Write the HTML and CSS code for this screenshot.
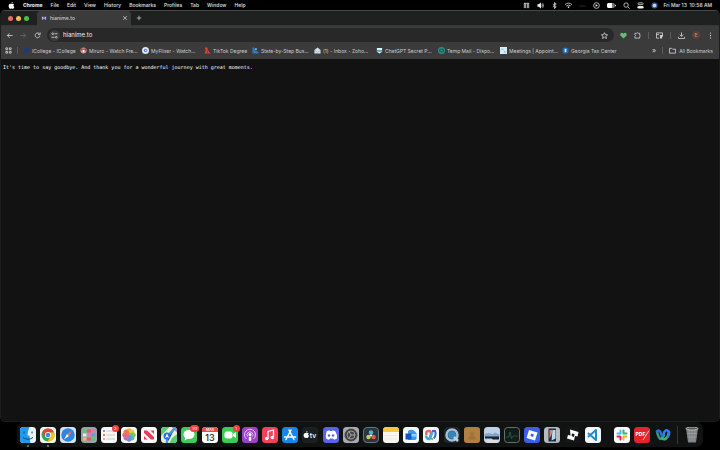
FILE: index.html
```
<!DOCTYPE html>
<html lang="en">
<head>
<meta charset="utf-8">
<title>hianime.to</title>
<link rel="stylesheet" href="styles.css">
</head>
<body>
<header class="menubar">
  <svg class="apple" viewBox="0 0 16 16"><path fill="#fff" d="M11 0c0 2-1.500 3.500-3.200 3.500C7.600 1.800 9.200.2 11 0zM8 4.600c.8 0 1.700-.8 3.100-.8 1.300 0 2.400.7 3 1.600-2.500 1.500-2.100 4.900.4 5.900-.7 2-2.100 4.300-3.500 4.300-1.100 0-1.500-.7-2.900-.7s-1.800.7-2.900.7C3.300 15.600 1.500 12 1.500 9c0-3.200 2-5.200 4-5.200 1.100 0 1.900.8 2.500.8z"/></svg>
  <nav class="menus">
    <a class="app" href="#">Chrome</a><a href="#">File</a><a href="#">Edit</a><a href="#">View</a><a href="#">History</a><a href="#">Bookmarks</a><a href="#">Profiles</a><a href="#">Tab</a><a href="#">Window</a><a href="#">Help</a>
  </nav>
  <div class="status">
    <svg viewBox="0 0 16 16"><path class="ln" d="M3 14V4h3v10M10 14V4h3v10M2 3h12"/></svg>
    <svg viewBox="0 0 16 16"><path fill="#eee" d="M1 5h3l5-4v14l-5-4H1z"/><path class="ln" d="M11 5q2 3 0 6M13 3q3 5 0 10"/></svg>
    <svg viewBox="0 0 16 16"><path class="ln" d="M4 5l8 6-4 4V1l4 4-8 6"/></svg>
    <svg viewBox="0 0 16 16"><path class="ln" d="M0 6q8-7 16 0M3 9q5-4 10 0"/><path fill="#fff" d="M5.500 11q2.500-2 5 0L8 14z"/></svg>
    <svg viewBox="0 0 16 16"><path stroke="#333" stroke-width="2" d="M1 9h14"/></svg>
    <svg viewBox="0 0 16 16"><circle class="ln" cx="8" cy="8" r="6.500"/><path fill="#fff" d="M6 5l5 3-5 3z"/></svg>
    <svg class="battery" viewBox="0 0 22 16"><rect x="0" y="2" width="19" height="12" rx="4" fill="#777"/><path fill="#fff" d="M4 2h8v12H4q-4 0-4-4V6q0-4 4-4zM20 6h2v4h-2z"/></svg>
    <svg viewBox="0 0 16 16"><circle class="ln" cx="7" cy="7" r="5"/><path class="ln" d="M11 11l4 4"/></svg>
    <svg viewBox="0 0 16 16"><rect class="ln" x="2" y="2" width="12" height="4" rx="2"/><rect x="1" y="9" width="14" height="6" rx="3" fill="#eee"/></svg>
    <svg viewBox="0 0 16 16"><circle cx="8" cy="8" r="7" fill="#3a5f9e"/><circle cx="8" cy="8" r="4" fill="#bdd4ed"/></svg>
  </div>
  <time class="clock">Fri Mar 13&nbsp; 10:56 AM</time>
</header>

<main class="window">
  <div class="tabstrip">
    <div class="lights"><button class="red" aria-label="Close window"></button><button class="yellow" aria-label="Minimize"></button><button class="green" aria-label="Full screen"></button></div>
    <div class="tab">
      <svg viewBox="0 0 16 16"><path fill="#4a4585" d="M1 3h14v10H1z"/><path d="M4 12V5l4 5 4-5v7" fill="none" stroke="#ddd" stroke-width="2"/></svg>
      <span>hianime.to</span>
      <button aria-label="Close tab"><svg viewBox="0 0 16 16"><path class="ln" d="M3 3l10 10M13 3L3 13"/></svg></button>
    </div>
    <button class="newtab" aria-label="New tab"><svg viewBox="0 0 16 16"><path class="ln" d="M8 2v12M2 8h12"/></svg></button>
  </div>
  <div class="toolbar">
    <div class="navs">
      <button aria-label="Back"><svg viewBox="0 0 16 16"><path class="ln" d="M15 8H3M8 3L3 8l5 5"/></svg></button>
      <button class="dim" aria-label="Forward"><svg viewBox="0 0 16 16"><path class="ln" d="M1 8h12M8 3l5 5-5 5"/></svg></button>
      <button aria-label="Reload"><svg viewBox="0 0 16 16"><path class="ln" d="M13 5a5.500 5.500 0 1 0 .5 4M14 1v5H9"/></svg></button>
    </div>
    <div class="omnibox">
      <button class="site" aria-label="Site information"><svg viewBox="0 0 16 16"><path class="ln" d="M8 4h7M1 12h7"/><circle class="ln" cx="4" cy="4" r="2"/><circle class="ln" cx="12" cy="12" r="2"/></svg></button>
      <input type="text" value="hianime.to" aria-label="Address">
      <button aria-label="Bookmark this tab"><svg viewBox="0 0 16 16"><path class="ln" d="M8 1.500l2 4.500 5 .5-3.800 3.200L12.500 15 8 12l-4.500 3 1.300-5.300L1 6.500 6 6z"/></svg></button>
    </div>
    <div class="tools">
      <button aria-label="Heart extension"><svg viewBox="0 0 16 16"><path fill="#64bd72" d="M8 15L1 8C-1 3 5-.5 8 4c3-4.500 9-1 7 4z"/></svg></button>
      <button aria-label="Extensions"><svg viewBox="0 0 16 16"><path class="ln" d="M2 3h4q2-3 4 0h3v4q3 2 0 4v3H2v-4q3-2 0-4z"/></svg></button>
      <i class="rule"></i>
      <button aria-label="Side panel"><svg viewBox="0 0 16 16"><path class="ln" d="M7 14H1V2h14v5M1 6h6"/><path fill="#ccc" d="M9 7h7v3l-2 1v4H9z"/></svg></button>
      <i class="rule"></i>
      <button aria-label="Downloads"><svg viewBox="0 0 16 16"><path class="ln" d="M8 1v9M4 6l4 4 4-4M1 11v4h14v-4"/></svg></button>
      <button class="avatar" aria-label="Profile">E</button>
      <button aria-label="Menu"><svg viewBox="0 0 16 16"><g fill="#ccc"><circle cx="8" cy="2.500" r="1.600"/><circle cx="8" cy="8" r="1.600"/><circle cx="8" cy="13.500" r="1.600"/></g></svg></button>
    </div>
  </div>
  <nav class="bookmarks">
    <button class="apps" aria-label="Apps"><svg viewBox="0 0 16 16"><path class="ln" d="M2 2h4v4H2zM10 2h4v4h-4zM2 10h4v4H2zM10 10h4v4h-4z"/></svg></button>
    <i class="rule"></i>
    <div class="links">
      <a class="mid" href="#"><svg viewBox="0 0 16 16"><path fill="#1d3685" d="M4 2h8l3 4-7 9-6-7z"/></svg><span>ICollege - ICollege</span></a>
      <a href="#"><svg viewBox="0 0 16 16"><circle cx="8" cy="8" r="7" fill="#c99"/><path fill="#a53434" d="M1 2l5 2h5l4-2-3 7H4z"/><path fill="#fff" d="M5 6h6l-2 6H7z"/></svg><span>Miruro - Watch Fre...</span></a>
      <a href="#"><svg viewBox="0 0 16 16"><circle cx="8" cy="8" r="8" fill="#dce8f8"/><circle cx="8" cy="8" r="4" fill="#4786d8"/><path fill="#fff" d="M7 6l4 2-4 2z"/></svg><span>MyFlixer - Watch...</span></a>
      <a class="short" href="#"><svg viewBox="0 0 16 16"><path fill="#e34338" d="M2 1h6v5l7 9H1l3-6z"/><path stroke="#4a2624" d="M8 8v6"/></svg><span>TikTok Degree</span></a>
      <a href="#"><svg viewBox="0 0 16 16"><path fill="#3277c2" d="M1 1h5v6l9 4v4H1z"/><path fill="#89b8e8" d="M7 3h4v4H7z"/></svg><span>State-by-Step Bus...</span></a>
      <a href="#"><svg viewBox="0 0 16 16"><path fill="#d5dfec" d="M1 7l7-6 7 6v8H1z"/><path stroke="#8597b5" fill="none" d="M2 8l6 4 6-4"/></svg><span>(1) - Inbox - Zoho...</span></a>
      <a href="#"><svg viewBox="0 0 16 16"><path fill="#e5f5fa" d="M2 2h12v9l-6 4-6-4z"/><path fill="#49a9bb" d="M2 7h12v4H2z"/></svg><span>ChatGPT Secret P...</span></a>
      <a href="#"><svg viewBox="0 0 16 16"><circle cx="8" cy="8" r="8" fill="#24938b"/><path stroke="#164e4c" fill="none" stroke-width="2" d="M4 5h8v6H4z"/></svg><span>Temp Mail - Dispo...</span></a>
      <a href="#"><svg viewBox="0 0 16 16"><path fill="#d8eafa" d="M0 0h16v16H0z"/><path fill="#9cc3e5" d="M3 4h5v3H3zM9 9h4v4H9z"/></svg><span>Meetings | Appoint...</span></a>
      <a href="#"><svg viewBox="0 0 16 16"><rect x="1" y="1" width="14" height="14" rx="4" fill="#1769b2"/><path fill="#dceafa" d="M6 4h4v8H6z"/></svg><span>Georgia Tax Center</span></a>
    </div>
    <button class="more" aria-label="More bookmarks">»</button>
    <i class="rule"></i>
    <a class="all" href="#"><svg viewBox="0 0 16 16"><path class="ln" d="M1 3h5l2 2h7v9H1z"/></svg><span>All Bookmarks</span></a>
  </nav>
  <article class="page"><pre>It's time to say goodbye. And thank you for a wonderful journey with great moments.</pre></article>
</main>

<footer class="dock">
  <a class="open" href="#" aria-label="Finder"><svg viewBox="0 0 32 32"><rect width="32" height="32" rx="7" fill="#eaf3fa"/><path fill="#2199ef" d="M7 0h12q-4 8-4 17h4q0 8 2 15H7q-7 0-7-7V7q0-7 7-7z"/><path d="M8 9v4M24 9v4M6 21q10 7 20 0" stroke="#174775" stroke-width="2" fill="none"/></svg></a>
  <a class="open" href="#" aria-label="Chrome"><svg viewBox="0 0 32 32"><rect width="32" height="32" rx="7" fill="#f6f6f6"/><circle cx="16" cy="16" r="13" fill="#35a853"/><path fill="#e84335" d="M4.500 10A13 13 0 0 1 28 11H16l-5 8z"/><path fill="#fbc116" d="M28 11q4 10-4 15.500-4 3-9 2.500l6-10-2-8z"/><circle cx="16" cy="16" r="6" fill="#fff"/><circle cx="16" cy="16" r="4.600" fill="#4285f4"/></svg></a>
  <a href="#" aria-label="Safari"><svg viewBox="0 0 32 32"><rect width="32" height="32" rx="7" fill="#d3e4f2"/><circle cx="16" cy="16" r="13.500" fill="#2e86e0"/><path fill="#fff" d="M8 25l6-11 4 4z"/><path fill="#e9786e" d="M24 8l-6 10-4-4z"/></svg></a>
  <a href="#" aria-label="Launchpad"><svg viewBox="0 0 32 32"><rect width="32" height="32" rx="7" fill="#9aa2a8"/><g><path fill="#55cb72" d="M4 5h7v6H4z"/><path fill="#e85b5b" d="M12 5h8v6h-8zM12 21h8v6h-8z"/><path fill="#e678ae" d="M21 5h7v6h-7zM12 13h8v6h-8z"/><path fill="#e6e9ea" d="M4 13h7v6H4z"/><path fill="#5b9fe0" d="M21 13h7v6h-7z"/><path fill="#efb851" d="M4 21h7v6H4z"/><path fill="#62c66f" d="M21 21h7v6h-7z"/></g></svg></a>
  <a href="#" aria-label="Reminders"><svg viewBox="0 0 32 32"><rect width="32" height="32" rx="7" fill="#f7f7f7"/><path stroke="#bbb" stroke-width="1.500" d="M11 8h17M11 16h17M11 24h17"/><circle cx="6" cy="8" r="2" fill="#3489e8"/><circle cx="6" cy="16" r="2" fill="#e94b45"/><circle cx="6" cy="24" r="2" fill="#f59c32"/></svg><b class="badge">2</b></a>
  <a href="#" aria-label="Photos"><svg viewBox="0 0 32 32"><rect width="32" height="32" rx="7" fill="#fafafa"/><g opacity=".9"><ellipse cx="16" cy="9" rx="5" ry="6.500" fill="#f5a62e"/><ellipse cx="16" cy="9" rx="5" ry="6.500" fill="#d6cc36" transform="rotate(45 16 16)"/><ellipse cx="16" cy="9" rx="5" ry="6.500" fill="#75bd4b" transform="rotate(90 16 16)"/><ellipse cx="16" cy="9" rx="5" ry="6.500" fill="#47b8a7" transform="rotate(135 16 16)"/><ellipse cx="16" cy="9" rx="5" ry="6.500" fill="#558bd6" transform="rotate(180 16 16)"/><ellipse cx="16" cy="9" rx="5" ry="6.500" fill="#a66ac3" transform="rotate(225 16 16)"/><ellipse cx="16" cy="9" rx="5" ry="6.500" fill="#e6577b" transform="rotate(270 16 16)"/><ellipse cx="16" cy="9" rx="5" ry="6.500" fill="#ef6745" transform="rotate(315 16 16)"/></g></svg></a>
  <a href="#" aria-label="News"><svg viewBox="0 0 32 32"><rect width="32" height="32" rx="7" fill="#fafafa"/><path fill="#ee3957" d="M6 7h6l14 13v5h-6L6 12zM6 18l7 7H6zM19 7h7v7z"/></svg></a>
  <a href="#" aria-label="Maps"><svg viewBox="0 0 32 32"><rect width="32" height="32" rx="7" fill="#e9efdf"/><path fill="#5bce75" d="M7 0h10L0 18V7q0-7 7-7zM32 14v11q0 7-7 7h-8l5-10z"/><path fill="#b57cdc" d="M25 0q7 0 7 7v4L21 0z"/><path stroke="#3b9cec" stroke-width="5" d="M12 32V20L28 2"/><circle cx="12" cy="18" r="7" fill="#2372dc"/><path fill="#fff" d="M12 13l4 9-4-2-4 2z"/></svg></a>
  <a href="#" aria-label="Messages"><svg viewBox="0 0 32 32"><rect width="32" height="32" rx="7" fill="#41cb5a"/><ellipse cx="16" cy="15" rx="11" ry="9" fill="#fff"/><path fill="#fff" d="M9 20l-2 7 8-4z"/></svg><b class="badge wide">99</b></a>
  <a href="#" aria-label="Calendar"><svg viewBox="0 0 32 32"><rect width="32" height="32" rx="7" fill="#fff"/><path fill="#f04b43" d="M0 10V7q0-7 7-7h18q7 0 7 7v3z"/><text x="16" y="8" class="month">MAR</text><text x="16" y="27" class="day">13</text></svg></a>
  <a href="#" aria-label="FaceTime"><svg viewBox="0 0 32 32"><rect width="32" height="32" rx="7" fill="#3bcc55"/><rect x="5" y="9" width="16" height="14" rx="4" fill="#fff"/><path fill="#fff" d="M22 14l6-4v12l-6-4z"/></svg><b class="badge">1</b></a>
  <a href="#" aria-label="Podcasts"><svg viewBox="0 0 32 32"><rect width="32" height="32" rx="7" fill="#9b42cd"/><g fill="none" stroke="#e7c6f5" stroke-width="2"><path d="M9 24a11 11 0 1 1 14 0M11 19a6 6 0 1 1 10 0"/></g><circle cx="16" cy="15" r="3" fill="#fff"/><rect x="13.500" y="19" width="5" height="9" rx="2" fill="#fff"/></svg></a>
  <a href="#" aria-label="Music"><svg viewBox="0 0 32 32"><rect width="32" height="32" rx="7" fill="#f5405a"/><path d="M12 23V9l11-3v14" fill="none" stroke="#fff" stroke-width="2.500"/><circle cx="9.500" cy="23" r="3.500" fill="#fff"/><circle cx="20.500" cy="21" r="3.500" fill="#fff"/></svg></a>
  <a href="#" aria-label="App Store"><svg viewBox="0 0 32 32"><rect width="32" height="32" rx="7" fill="#1686e9"/><path d="M18 6L8 25M14 6l10 19M5 20h22" fill="none" stroke="#fff" stroke-width="3" stroke-linecap="round"/></svg></a>
  <a href="#" aria-label="Apple TV"><svg viewBox="0 0 32 32"><rect width="32" height="32" rx="7" fill="#1b1f1f"/><path fill="#fff" d="M11 8q-3 0-3 3 3 0 3-3zM8 12q3-1 5 0-2 4 1 6-2 5-4 4-2-1-4 0-3-2-3-6 1-5 5-4z"/><text x="22" y="21" class="tv">tv</text></svg></a>
  <a href="#" aria-label="Discord"><svg viewBox="0 0 32 32"><rect width="32" height="32" rx="7" fill="#5965e8"/><path fill="#fff" d="M7 9q4-3 6-2l1 1h4l1-1q2-1 6 2 4 7 3 14-5 3-6 2l-2-2h-6l-2 2q-2 1-6-2-1-7 1-14z"/><circle cx="12" cy="17" r="2.500" fill="#5965e8"/><circle cx="20" cy="17" r="2.500" fill="#5965e8"/></svg></a>
  <a href="#" aria-label="Settings"><svg viewBox="0 0 32 32"><rect width="32" height="32" rx="7" fill="#a8acb0"/><circle cx="16" cy="16" r="12" fill="#444" stroke="#303030" stroke-width="2" stroke-dasharray="2 1"/><circle cx="16" cy="16" r="8" fill="none" stroke="#999" stroke-width="2"/><path d="M16 16h8M16 16l-4-7M16 16l-4 7" stroke="#aaa" stroke-width="2"/></svg></a>
  <a href="#" aria-label="DaVinci Resolve"><svg viewBox="0 0 32 32"><rect x="1" y="1" width="30" height="30" rx="7" fill="#293640" stroke="#68747d" stroke-width="2"/><circle cx="16" cy="11" r="4.500" fill="#4bb4d2"/><circle cx="11" cy="20" r="4.500" fill="#c9cc53"/><circle cx="21" cy="20" r="4.500" fill="#e65a52"/><circle cx="16" cy="17" r="2" fill="#fff"/></svg></a>
  <a href="#" aria-label="Notes"><svg viewBox="0 0 32 32"><rect width="32" height="32" rx="7" fill="#f8f6ef"/><path fill="#f6c83e" d="M0 10V7q0-7 7-7h18q7 0 7 7v3z"/><path stroke="#ddd" d="M3 17h26M3 24h26"/></svg></a>
  <a href="#" aria-label="Outlook"><svg viewBox="0 0 32 32"><rect width="32" height="32" rx="7" fill="#f7fafc"/><path fill="#3f97ef" d="M10 8q6-5 13 0l4 4v11q0 3-4 3H10z"/><path fill="#1557bd" d="M5 13h12v12H5z"/><path fill="#8ed3fa" d="M17 14h10v5H17z"/></svg></a>
  <a href="#" aria-label="Freeform"><svg viewBox="0 0 32 32"><rect width="32" height="32" rx="7" fill="#f8f8f8"/><path d="M7 16q-2-8 4-8 5-1 5 7l-3 8" stroke="#ee674d" stroke-width="5" fill="none"/><path d="M6 17q1 8 7 7l6-14" stroke="#3daee2" stroke-width="5" fill="none"/><path d="M18 8h6q3 7-2 15" stroke="#4068cf" stroke-width="4" fill="none"/><path d="M15 22l5 3" stroke="#56b764" stroke-width="4"/></svg></a>
  <a href="#" aria-label="QuickTime"><svg viewBox="0 0 32 32"><rect width="32" height="32" rx="7" fill="#1d252c"/><circle cx="16" cy="16" r="11" fill="none" stroke="#a8bfd4" stroke-width="5"/><circle cx="16" cy="16" r="8" fill="#3585b8"/><path stroke="#bdd1df" stroke-width="5" d="M20 20l8 8"/></svg></a>
  <a href="#" aria-label="Contacts"><svg viewBox="0 0 32 32"><rect width="32" height="32" rx="6" fill="#b08043"/><circle cx="16" cy="13" r="4" fill="#a07138"/><path fill="#a07138" d="M8 25q0-8 8-8t8 8z"/></svg></a>
  <a href="#" aria-label="Preview"><svg viewBox="0 0 32 32"><rect width="32" height="32" rx="7" fill="#bfcfe5"/><path fill="#86a5cc" d="M1 14l8-2 8 2 5-3 9 4v6H1z"/><path fill="#192333" d="M2 19h28v6H18l-3-2H2z"/><path fill="#ddd" d="M2 26h28l-4 6H7z"/></svg></a>
  <a href="#" aria-label="Activity Monitor"><svg viewBox="0 0 32 32"><rect x="1" y="1" width="30" height="30" rx="6" fill="#101d19" stroke="#66706d" stroke-width="2"/><path d="M4 20h6l2-10 3 13 3-5h10" stroke="#42806a" fill="none"/></svg></a>
  <a href="#" aria-label="Roblox"><svg viewBox="0 0 32 32"><rect width="32" height="32" rx="7" fill="#3b5fe9"/><path fill="#fff" fill-rule="evenodd" d="M10 6l17 5-5 16-17-5zM14 13l-1 5 5 2 2-5z"/></svg></a>
  <a href="#" aria-label="Phone mirroring"><svg viewBox="0 0 32 32"><rect width="32" height="32" rx="7" fill="#b6bbbd"/><path fill="#182b42" d="M9 3h15v26H9z"/><path fill="#eb8069" d="M11 6h6l-2 10-4 7z"/><path fill="#b9dceb" d="M17 6h6v17l-8 4z"/></svg></a>
  <a href="#" aria-label="Roblox Studio"><svg viewBox="0 0 32 32"><rect width="32" height="32" rx="7" fill="#151515"/><path fill="#fff" fill-rule="evenodd" d="M10 5l17 5-2 9-5-1-2 9-14-4 2-7 5 1zM14 13l-1 5 5 2 1-6z"/></svg></a>
  <a href="#" aria-label="Visual Studio Code"><svg viewBox="0 0 32 32"><rect width="32" height="32" rx="7" fill="#f5f8fb"/><path d="M6 12l16 14V6L6 20" fill="none" stroke="#218bd0" stroke-width="4" stroke-linejoin="round"/></svg></a>
  <i class="divider"></i>
  <a href="#" aria-label="Slack"><svg viewBox="0 0 32 32"><rect width="32" height="32" rx="7" fill="#fafafa"/><g stroke-width="4" stroke-linecap="round"><path stroke="#36c5f0" d="M13 7v6M7 13h6"/><path stroke="#2eb67d" d="M19 7v6M20 13h5"/><path stroke="#e01e5a" d="M7 19h5M13 20v5"/><path stroke="#ecb22e" d="M19 19v6M20 19h5"/></g></svg></a>
  <a href="#" aria-label="PDF"><svg viewBox="0 0 32 32"><rect width="32" height="32" rx="7" fill="#e3242d"/><text x="13" y="18" class="pdf">PDF</text><path stroke="#ffbfc0" stroke-width="2" d="M18 26L30 7"/></svg></a>
  <a href="#" aria-label="Webex"><svg viewBox="0 0 32 32"><g fill="none" stroke-width="5" stroke-linecap="round"><path d="M4 9q3 15 8 15 4 0 6-9" stroke="#339f76"/><path d="M4 9q4-4 7 1l4 12" stroke="#256fdc"/><path d="M14 22q2 4 7 2 5-4 7-14" stroke="#3baf83"/><path d="M17 14q3-9 8-7 6 3 1 12" stroke="#2d80ee"/></g></svg></a>
  <i class="divider line"></i>
  <a href="#" aria-label="Trash"><svg viewBox="0 0 32 32"><path fill="#7b7f81" d="M4 3h24l-4 28H8z"/><path d="M10 6l2 23M16 6v23M22 6l-2 23M6 13h20M7 20h18" stroke="#abadae"/><ellipse cx="16" cy="3" rx="12" ry="3" fill="#555" stroke="#bbb" stroke-width="2"/></svg></a>
</footer>
</body>
</html>
```
FILE: styles.css
```
* { box-sizing: border-box; }
body {
  margin: 0;
  min-height: 100vh;
  padding-bottom: 3px;
  display: flex;
  flex-direction: column;
  background: #000;
  color: #e2e2e2;
  font: 500 5px/8px Inter, "Liberation Sans", sans-serif;
}
svg { display: block; width: 7px; height: 7px; flex: none; }
.ln { fill: none; stroke: #ccc; stroke-width: 2; }
a { color: inherit; text-decoration: none; }
button {
  padding: 0;
  border: 0;
  background: none;
  color: inherit;
  font: inherit;
  flex: none;
}

.menubar { display: flex; align-items: center; height: 10px; padding: 0 8px; white-space: nowrap; }
.menus { display: flex; gap: 8px; margin-left: 8px; }
.app { font-weight: 800; }
.status { display: flex; gap: 7px; margin-left: auto; }
.status .battery { width: 9px; }
.clock { margin-left: 6px; }

.window {
  flex: 1;
  display: flex;
  flex-direction: column;
  overflow: hidden;
  border: 1px solid #1c1d1d;
  border-top-color: #454646;
  border-radius: 5px;
  background: #121212;
}
.tabstrip { display: flex; align-items: center; height: 15px; background: #1f2120; border-bottom: 1px solid #353636; }
.lights { display: flex; gap: 3px; width: 36px; padding-left: 7px; }
.lights button { width: 5px; height: 5px; border-radius: 50%; }
.red { background: #ed6a5e; }
.yellow { background: #f4bf4f; }
.green { background: #45c148; }
.tab {
  display: flex;
  align-items: center;
  gap: 3px;
  width: 94px;
  height: 15px;
  padding: 0 3px 0 4px;
  border-radius: 4px 4px 0 0;
  background: #3b3b3b;
  color: #c8c8c8;
}
.tab svg { width: 6px; height: 6px; }
.tab button { margin-left: auto; }
.newtab { margin-left: 5px; }
.newtab svg { width: 6px; height: 6px; }

.toolbar { display: flex; align-items: center; height: 18px; padding: 0 5px; background: #3b3b3b; }
.navs { display: flex; gap: 7px; }
.dim { opacity: .3; }
.omnibox {
  flex: 1;
  display: flex;
  align-items: center;
  gap: 3px;
  height: 14px;
  margin: 0 6px;
  padding: 0 6px 0 2px;
  border-radius: 7px;
  background: #282828;
}
.site { padding: 2px; border-radius: 50%; background: #3b3b3b; }
.omnibox input {
  flex: 1;
  min-width: 0;
  padding: 0;
  border: 0;
  outline: 0;
  background: none;
  color: #eee;
  font: 400 6px/8px Inter, "Liberation Sans", sans-serif;
}
.tools { display: flex; align-items: center; gap: 7px; }
.rule { flex: none; width: 1px; height: 7px; background: #5a5a5a; }
.avatar { width: 8px; height: 8px; border-radius: 50%; background: #59413c; color: #d08a72; line-height: 8px; }

.bookmarks {
  display: flex;
  align-items: center;
  height: 15px;
  padding: 0 6px 2px 4px;
  background: #3b3b3b;
  color: #ccc;
  font-weight: 400;
  white-space: nowrap;
}
.apps { margin-right: 5px; }
.links { flex: 1; display: flex; min-width: 0; margin-left: 5px; overflow: hidden; }
.links a { flex: 0 0 62px; display: flex; align-items: center; gap: 2px; }
.links .mid { flex-basis: 57px; }
.links .short { flex-basis: 48px; }
.more { margin-right: 6px; font-size: 7px; }
.all { display: flex; align-items: center; gap: 3px; margin-left: 6px; }

.page { flex: 1; padding: 4px 2px; }
pre { margin: 0; color: #fff; font: 5px/8px "DejaVu Sans Mono", monospace; white-space: pre-wrap; }

.dock {
  display: flex;
  align-items: center;
  justify-content: space-between;
  height: 25px;
  margin: 0 17px;
  padding: 0 3px;
  border-radius: 7px;
  background: #111212;
}
.dock a { position: relative; }
.dock svg { width: 16px; height: 16px; }
.open::after {
  content: "";
  position: absolute;
  left: 7px;
  bottom: -4px;
  width: 2px;
  height: 2px;
  border-radius: 50%;
  background: #888;
}
.badge {
  position: absolute;
  top: -2px;
  right: -2px;
  width: 7px;
  height: 7px;
  border-radius: 4px;
  background: #f14339;
  color: #fbb;
  font-size: 4px;
  line-height: 7px;
  text-align: center;
}
.wide { width: 9px; }
.divider { width: 5px; height: 18px; }
.line { background: linear-gradient(90deg, transparent 2px, #343535 2px, #343535 3px, transparent 3px); }
.month, .day, .tv, .pdf { text-anchor: middle; font-family: Inter, sans-serif; }
.month { fill: #fff; font-size: 7px; }
.day { fill: #222; font-size: 18px; }
.tv { fill: #fff; font-size: 14px; }
.pdf { fill: #fff; font-size: 10px; font-weight: 700; }
```
